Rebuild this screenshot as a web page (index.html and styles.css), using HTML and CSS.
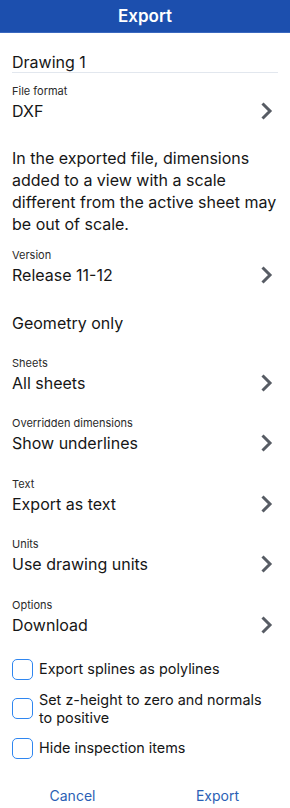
FILE: index.html
```html
<!DOCTYPE html>
<html lang="en">
<head>
<meta charset="utf-8">
<title>Export</title>
<link rel="stylesheet" href="styles.css">
</head>
<body>
<header class="header">Export</header>
<main class="content">
  <div class="name-input">Drawing 1</div>

  <div class="field field-first">
    <div class="label">File format</div>
    <div class="value-row"><span class="value">DXF</span><svg class="chev" viewBox="0 0 13 20" width="13" height="20"><path d="M2.5 2.5 L10 10 L2.5 17.5" fill="none" stroke="#575c64" stroke-width="3"/></svg></div>
  </div>

  <p class="note">In the exported file, dimensions added to a view with a scale different from the active sheet may be out of scale.</p>

  <div class="field field-version">
    <div class="label">Version</div>
    <div class="value-row"><span class="value">Release 11-12</span><svg class="chev" viewBox="0 0 13 20" width="13" height="20"><path d="M2.5 2.5 L10 10 L2.5 17.5" fill="none" stroke="#575c64" stroke-width="3"/></svg></div>
  </div>

  <div class="plain">Geometry only</div>

  <div class="field">
    <div class="label">Sheets</div>
    <div class="value-row"><span class="value">All sheets</span><svg class="chev" viewBox="0 0 13 20" width="13" height="20"><path d="M2.5 2.5 L10 10 L2.5 17.5" fill="none" stroke="#575c64" stroke-width="3"/></svg></div>
  </div>

  <div class="field">
    <div class="label">Overridden dimensions</div>
    <div class="value-row"><span class="value">Show underlines</span><svg class="chev" viewBox="0 0 13 20" width="13" height="20"><path d="M2.5 2.5 L10 10 L2.5 17.5" fill="none" stroke="#575c64" stroke-width="3"/></svg></div>
  </div>

  <div class="field">
    <div class="label">Text</div>
    <div class="value-row"><span class="value">Export as text</span><svg class="chev" viewBox="0 0 13 20" width="13" height="20"><path d="M2.5 2.5 L10 10 L2.5 17.5" fill="none" stroke="#575c64" stroke-width="3"/></svg></div>
  </div>

  <div class="field">
    <div class="label">Units</div>
    <div class="value-row"><span class="value">Use drawing units</span><svg class="chev" viewBox="0 0 13 20" width="13" height="20"><path d="M2.5 2.5 L10 10 L2.5 17.5" fill="none" stroke="#575c64" stroke-width="3"/></svg></div>
  </div>

  <div class="field field-last">
    <div class="label">Options</div>
    <div class="value-row"><span class="value">Download</span><svg class="chev" viewBox="0 0 13 20" width="13" height="20"><path d="M2.5 2.5 L10 10 L2.5 17.5" fill="none" stroke="#575c64" stroke-width="3"/></svg></div>
  </div>

  <div class="checks">
    <label class="check"><span class="box"></span><span class="check-text">Export splines as polylines</span></label>
    <label class="check"><span class="box"></span><span class="check-text">Set z-height to zero and normals to positive</span></label>
    <label class="check"><span class="box"></span><span class="check-text">Hide inspection items</span></label>
  </div>
</main>
<footer class="footer">
  <button class="btn">Cancel</button>
  <button class="btn">Export</button>
</footer>
</body>
</html>
```

FILE: styles.css
```css
* { box-sizing: border-box; }
html, body { margin: 0; padding: 0; }
body {
  width: 290px;
  height: 808px;
  overflow: hidden;
  background: #ffffff;
  font-family: Inter, "Noto Sans", sans-serif;
  color: #161616;
}
.header {
  height: 33px;
  background: #1c4fae;
  color: #ffffff;
  font-size: 17px;
  font-weight: 600;
  line-height: 33px;
  text-align: center;
  border-bottom: 1px solid #3a68bf;
}
.content {
  padding: 0 12px;
}
.name-input {
  margin-top: 19px;
  font-size: 16px;
  line-height: 20px;
  border-bottom: 1.5px solid #e2e7ee;
}
.field {
  margin-bottom: 21.5px;
}
.field-first { margin-top: 10.5px; margin-bottom: 24px; }
.field-version { margin-top: 13px; margin-bottom: 24px; }
.field-last { margin-bottom: 22px; }
.label {
  font-size: 11px;
  line-height: 14px;
  color: #2a2a2a;
}
.value-row {
  margin-top: 1px;
  height: 24px;
  display: flex;
  align-items: center;
  justify-content: space-between;
}
.value {
  font-size: 16px;
  line-height: 24px;
}
.chev {
  display: block;
  margin-right: 5px;
}
.note {
  margin: 0;
  font-size: 16px;
  line-height: 22px;
}
.plain {
  font-size: 16px;
  line-height: 24px;
  margin-bottom: 21px;
}
.checks {
  display: flex;
  flex-direction: column;
  gap: 11px;
}
.check {
  display: flex;
  align-items: center;
  gap: 6px;
}
.box {
  flex: none;
  width: 21px;
  height: 21px;
  border: 1.5px solid #2f86f0;
  border-radius: 5px;
}
.check-text {
  font-size: 14.4px;
  line-height: 18px;
}
.footer {
  margin-top: 27px;
  display: flex;
}
.btn {
  flex: 1;
  background: none;
  border: 0;
  padding: 0;
  font-family: inherit;
  font-size: 14px;
  line-height: 20px;
  color: #2b5fb5;
}
```
